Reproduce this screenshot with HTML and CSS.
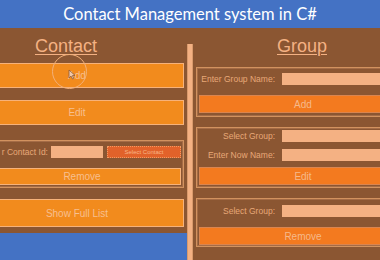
FILE: index.html
```html
<!DOCTYPE html>
<html lang="en">
<head>
    <meta charset="UTF-8">
    <title>Contact Management system in C#</title>
    <link rel="stylesheet" href="styles.css">
</head>
<body>
    <div class="title-bar">Contact Management system in C#</div>

    <div class="main">
        <!-- 左側：聯絡人 -->
        <div class="contact-panel">
            <h2 class="heading contact-heading">Contact</h2>
            <div class="btn btn-big">Add</div>
            <div class="btn btn-big">Edit</div>
            <div class="box contact-box">
                <div class="row contact-row">
                    <span class="label">r Contact Id:</span>
                    <span class="input small-input"></span>
                    <span class="select-btn">Select Contact</span>
                </div>
                <div class="btn btn-remove">Remove</div>
            </div>
            <div class="btn btn-list">Show Full List</div>
            <div class="bottom-blue"></div>
        </div>

        <div class="separator"></div>

        <!-- 右側：群組 -->
        <div class="group-panel">
            <h2 class="heading">Group</h2>
            <div class="box box-add">
                <div class="row">
                    <span class="label">Enter Group Name:</span>
                    <span class="input"></span>
                </div>
                <div class="btn btn-group">Add</div>
            </div>
            <div class="box box-edit">
                <div class="row">
                    <span class="label">Select Group:</span>
                    <span class="input"></span>
                </div>
                <div class="row">
                    <span class="label">Enter Now Name:</span>
                    <span class="input"></span>
                </div>
                <div class="btn btn-group">Edit</div>
            </div>
            <div class="box box-remove">
                <div class="row">
                    <span class="label">Select Group:</span>
                    <span class="input"></span>
                </div>
                <div class="btn btn-group">Remove</div>
            </div>
        </div>
    </div>

    <!-- 錄影時的滑鼠提示 -->
    <div class="click-ring"></div>
    <svg class="cursor" width="8" height="11" viewBox="0 0 8 11">
        <path d="M1 1 L1 9 L3 7 L4.5 10 L5.8 9.4 L4.4 6.6 L7 6.4 Z" fill="#f2c9a8" stroke="#8c5a3a" stroke-width="0.8"/>
    </svg>
</body>
</html>
```

FILE: styles.css
```css
/* 基本樣式 */
body {
    margin: 0;
    padding: 0;
    width: 380px;
    height: 260px;
    overflow: hidden;
    background-color: #8b5632;
    font-family: "Liberation Sans", Arial, sans-serif;
    position: relative;
}

.title-bar {
    height: 28px;
    line-height: 28px;
    background-color: #4472c4;
    color: #ffffff;
    text-align: center;
    font-family: Lato, "Open Sans", sans-serif;
    font-size: 16.5px;
}

.main {
    display: flex;
    gap: 3px;
    height: 232px;
}

.contact-panel {
    margin-left: -30px;
    width: 214px;
    flex: none;
    display: flex;
    flex-direction: column;
}

.group-panel {
    width: 212px;
    flex: none;
    display: flex;
    flex-direction: column;
}

.heading {
    margin: 8px 0 7px;
    height: 20px;
    line-height: 20px;
    font-size: 18px;
    font-weight: normal;
    text-align: center;
    color: #f4b183;
    text-decoration: underline;
    text-underline-offset: 2px;
    text-decoration-thickness: 1px;
}

.contact-heading {
    padding-right: 22px;
}

.group-panel .heading {
    margin-bottom: 11px;
}

.separator {
    width: 6px;
    flex: none;
    margin-top: 16px;
    background-color: #f4b183;
    box-shadow: inset 1px 0 0 #d99a6c, inset -1px 0 0 #d99a6c;
}

/* 按鈕 */
.btn {
    box-sizing: border-box;
    display: flex;
    align-items: center;
    justify-content: center;
    font-size: 10px;
    color: #f7bf8f;
    background-color: #f28b1d;
    border: 1px solid #f7b27a;
}

.btn-big {
    height: 25px;
    margin-bottom: 12px;
}

.btn-big + .btn-big {
    margin-bottom: 15px;
}

.btn-remove {
    height: 17px;
    margin-right: 2px;
}

.btn-list {
    height: 28px;
    margin-top: 11px;
    font-size: 10px;
}

.btn-group {
    height: 18px;
    margin-left: 2px;
    background-color: #f37a1f;
    border-color: #d98550;
    color: #f6b98a;
}

.bottom-blue {
    flex: 1;
    margin-top: 6px;
    margin-right: -4px;
    background-color: #4472c4;
}

/* 群組框 */
.box {
    box-sizing: border-box;
    border: 1px solid #d2925f;
    box-shadow: inset 0 0 0 1px rgba(244, 177, 131, 0.25);
    display: flex;
    flex-direction: column;
}

.contact-box {
    padding: 5px 0 2px 12px;
    gap: 10px;
}

.box-add {
    padding: 5px 0 3px;
    gap: 10px;
}

.box-edit {
    margin-top: 10px;
    padding: 2px 0 2px;
    gap: 7px;
}

.box-edit .btn {
    margin-top: -1px;
}

.box-remove {
    margin-top: 10px;
    padding: 6px 0 1px;
    gap: 10px;
}

.row {
    display: flex;
    align-items: center;
    height: 12px;
}

.label {
    width: 78px;
    flex: none;
    text-align: right;
    font-size: 8.5px;
    color: #e8a878;
    white-space: nowrap;
}

.input {
    flex: 1;
    height: 12px;
    margin-left: 7px;
    background-color: #f4b183;
}

.contact-row {
    justify-content: flex-end;
    padding-right: 2px;
}

.contact-row .label {
    width: auto;
}

.small-input {
    flex: none;
    width: 52px;
    margin-left: 3px;
}

.select-btn {
    box-sizing: border-box;
    width: 74px;
    height: 12px;
    margin-left: 4px;
    background-color: #e2622a;
    border: 1px dotted #f29a62;
    color: #f7b487;
    font-size: 6px;
    display: flex;
    align-items: center;
    justify-content: center;
}

/* 滑鼠提示 */
.click-ring {
    position: absolute;
    left: 52px;
    top: 54px;
    width: 33px;
    height: 33px;
    border: 1.5px solid #f2b07a;
    border-radius: 50%;
}

.cursor {
    position: absolute;
    left: 68px;
    top: 69px;
}
```
